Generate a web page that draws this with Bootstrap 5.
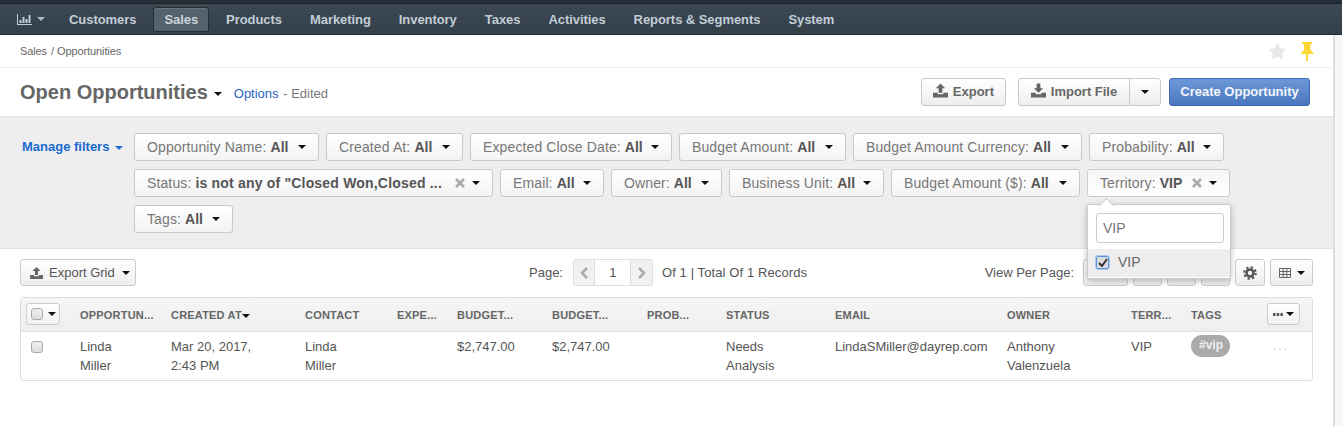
<!doctype html>
<html lang="en">
<head>
<meta charset="utf-8">
<title>Open Opportunities</title>
<link href="https://cdn.jsdelivr.net/npm/bootstrap@5.3.0/dist/css/bootstrap.min.css" rel="stylesheet">
<style>
html,body{height:426px;overflow:hidden}
body{font-family:"Liberation Sans",Arial,sans-serif;font-size:13px;color:#555;background:#fff;line-height:19px}
.topstrip{height:4px;background:#262f37;border-bottom:1px solid #1c2328}
.mainbar{height:31px;background:linear-gradient(#3c4853,#33404a);border-bottom:1px solid #20282f;padding:0 0 0 17px}
.mainbar a{color:#c2cdd6;font-weight:700;font-size:13px;letter-spacing:-.06px;text-decoration:none;line-height:23px;padding:0 10px;margin-right:6px;border-radius:3px;border:1px solid transparent;height:25px}
.mainbar a.first{padding:0;margin-right:6px;width:35px;display:flex;align-items:center;gap:5px;border:0}
.mainbar a.on{background:#55616c;border-color:#232c33;color:#ccd5dc;box-shadow:inset 0 1px 0 #66727d}
.pagebody{height:391px}
.mainpane{width:1333px;flex:none}
.gutter{flex:1;background:#f7f7f7;border-left:2px solid #ddd}
.crumbs{height:33px;border-bottom:1px solid #eee;padding:0 19px 0 20px;font-size:11px;letter-spacing:-.1px;color:#666}
.crumbs .sep{margin:0 3px 0 4px}
.crumbicons{gap:13px}
.headrow{height:48px;padding:0 23px 0 20px}
.ttl{font-size:20px;font-weight:700;color:#666;line-height:24px}
.caret-s{display:inline-block;border-top:4px solid #111;border-left:4px solid transparent;border-right:4px solid transparent;vertical-align:middle;flex:none}
.mainbar .navcaret{border-top-color:#aebac4}
.ttlcaret{margin-left:6px;margin-top:3px}
.opt{color:#2a64c4;margin-left:12px;margin-top:2px}
.edited{color:#777;margin-top:2px;margin-left:1px}
.cbtn{height:28px;padding:0 11px;border:1px solid #c8c8c8;border-radius:3px;background:linear-gradient(#fff,#eee);color:#666;font-weight:700;font-size:13px;line-height:26px;white-space:nowrap}
.cbtn svg{vertical-align:-2px;margin-right:5px}
.cbtn.lft{border-radius:3px 0 0 3px;width:112px;padding:0}
.cbtn.rgt{border-radius:0 3px 3px 0;padding:0;width:32px;display:flex;align-items:center;justify-content:center;margin-left:-1px}
.importgrp{margin-left:12px}
.cprimary{background:linear-gradient(#6d98d9,#4a76bf);border:1px solid #3e68ad;color:#f3f6fb;height:28px;width:141px;padding:0;border-radius:3px;font-weight:700;font-size:13px;line-height:26px;margin-left:8px;white-space:nowrap}
.filters{background:#eee;height:133px;padding:16px 0 0 22px;border-top:1px solid #e3e3e3;border-bottom:1px solid #e3e3e3}
.manage{color:#1a6ad0;font-weight:700;font-size:13px;width:112px;flex:none;padding-top:4px;line-height:19px}
.manage .caret-s{border-top-color:#1a6ad0;margin-left:2px}
.chiprow{display:flex;flex-wrap:wrap;align-content:flex-start;gap:8px 7px;width:1110px}
.chip{height:28px;background:linear-gradient(#fff,#f3f3f3);border:1px solid #c9c9c9;border-radius:3px;padding:0 12px;color:#777;font-size:14px;letter-spacing:.12px;line-height:26px;white-space:nowrap;display:flex;align-items:center}
.chip b{color:#555;margin-left:4px;letter-spacing:0}
.chip .caret-s{margin-left:auto}
.chip .xx{margin-left:auto}
.chip .xx + .caret-s{margin-left:7px}
.chip .xx svg{display:block}
.chip:nth-child(1){width:185px}.chip:nth-child(2){width:137px}.chip:nth-child(3){width:202px}.chip:nth-child(4){width:167px}.chip:nth-child(5){width:229px}.chip:nth-child(6){width:135px}
.chip:nth-child(7){width:359px}.chip:nth-child(8){width:104px}.chip:nth-child(9){width:111px}.chip:nth-child(10){width:155px}.chip:nth-child(11){width:189px}.chip:nth-child(12){width:143px}.chip:nth-child(13){width:99px}
.chip:nth-child(7) b{letter-spacing:.19px}
.chip.open{background:linear-gradient(#f6f6f6,#fff);border-color:#ccc}
.popmenu{position:absolute;left:1087px;top:204px;width:144px;height:75px;background:#fff;border:1px solid #ccc;border-radius:2px;box-shadow:0 2px 6px rgba(0,0,0,.25);z-index:10}
.popmenu:before{content:"";position:absolute;left:13px;top:-5px;width:11px;height:11px;background:#fff;border-left:1px solid #ccc;border-top:1px solid #ccc;transform:rotate(45deg)}
.popinput{display:block;margin:8px 6px 0 8px;width:128px;height:30px;border:1px solid #ccc;border-radius:3px;font-size:14px;color:#777;padding:0 6px;line-height:28px;position:relative;background:#fff}
.popitem{margin-top:6px;height:28px;background:#eee;display:flex;align-items:center;font-size:14px;color:#666;padding:0 0 2px 8px;gap:9px}
.popcheck{width:13px;height:13px;border:1px solid #5c8fe0;outline:1px solid #a9c5f0;border-radius:2px;background:#ddd;display:flex;align-items:center;justify-content:center}
.toolrow{height:48px;padding:10px 20px 0;align-items:flex-start}
.exgrid{width:116px;height:27px;padding:0 5px 0 9px;border:1px solid #ccc;border-radius:3px;background:linear-gradient(#fff,#eee);font-size:13px;color:#555;display:flex;align-items:center;gap:6px;line-height:1;white-space:nowrap;flex:none}
.exgrid .caret-s{margin-left:auto}
.midpart{margin-left:393px;height:27px;display:flex;align-items:center;white-space:nowrap}
.pager{display:flex;height:27px;margin:0 9px 0 10px;border:1px solid #ddd;border-radius:3px;background:#f1f1f1;width:80px}
.pager span{flex:1;display:flex;align-items:center;justify-content:center}
.pager i{font-style:normal;width:37px;background:#fff;border-left:1px solid #ddd;border-right:1px solid #ddd;text-align:center;line-height:25px;font-size:13px}
.totals{letter-spacing:.1px}
.rgtools{margin-left:auto;display:flex;height:27px;align-items:center;white-space:nowrap;gap:5px}
.rgtools span.lbl{margin-right:4px}
.tb{height:27px;border:1px solid #ccc;border-radius:3px;background:linear-gradient(#fff,#eee);display:flex;align-items:center;justify-content:center;flex:none}
.w45{width:45px}.w29{width:29px}.w30{width:30px}.w43{width:43px;gap:6px}
.gridwrap{margin:0 20px;width:1293px;height:84px;border:1px solid #ddd;border-radius:3px}
.gridtable{width:1291px;table-layout:fixed;border-collapse:collapse;margin:0;font-size:13px;--bs-table-bg:transparent}
.gridtable th{height:33px;padding:3px 0 0 5px;font-size:11px;font-weight:700;letter-spacing:.2px;color:#666;background:linear-gradient(#f6f6f6,#eee);border-bottom:1px solid #ddd;white-space:nowrap;vertical-align:middle;line-height:1}
.gridtable th:first-child,.gridtable th:last-child{padding-top:0}
.gridtable td{padding:5px 0 0 5px;vertical-align:top;color:#555;line-height:19px;border:0}
.sq{display:inline-block;width:12px;height:12px;border:1px solid #aaa;border-radius:3px;background:linear-gradient(#eee,#ddd)}
.sq.rowchk{margin-left:5px;margin-top:4px;display:block}
.hchk{width:34px;height:22px;border:1px solid #ccc;border-radius:3px;display:flex;align-items:center;gap:5px;padding-left:4px;background:linear-gradient(#fff,#f1f1f1)}
.hmore{width:33px;height:22px;border:1px solid #ccc;border-radius:3px;display:flex;align-items:center;gap:3px;justify-content:center;background:linear-gradient(#fff,#f1f1f1)}
.tagpill{display:inline-block;background:#aaa;color:#eee;font-weight:700;font-size:12px;border-radius:11px;height:22px;line-height:21px;padding:0 7px 0 8px;margin-top:-2px;vertical-align:top}
.gridtable td.dots{color:#ccc;letter-spacing:2px;padding-left:11px;font-size:12px}
</style>
</head>
<body>
<div class="topstrip"></div>
<nav class="mainbar d-flex align-items-center">
<a class="first" href="#" aria-label="Dashboard"><svg width="15" height="11" viewBox="0 0 15 11"><path fill="#c2cdd6" d="M0 0h1v10h14v1H0zM2.500 6h2v3h-2zM5.500 3h2v6h-2zM8.500 5h2v4h-2zM11.500 1h2v8h-2z"/></svg><span class="caret-s navcaret"></span></a>
<a href="#">Customers</a><a class="on" href="#">Sales</a><a href="#">Products</a><a href="#">Marketing</a><a href="#">Inventory</a><a href="#">Taxes</a><a href="#">Activities</a><a href="#">Reports &amp; Segments</a><a href="#">System</a>
</nav>
<div class="pagebody d-flex">
<div class="mainpane">
<div class="crumbs d-flex align-items-center justify-content-between">
<div>Sales<span class="sep">/</span>Opportunities</div>
<div class="crumbicons d-flex align-items-center">
<svg width="19" height="18" viewBox="0 0 19 18"><path fill="#e8e8e8" d="M9.500 0.500l2.800 5.700 6.200.9-4.500 4.400 1.100 6.200-5.600-2.900-5.600 2.900 1.100-6.200L.500 7.100l6.200-.9z"/></svg>
<svg width="14" height="19" viewBox="0 0 14 19"><path fill="#fdd835" d="M2 0h10v2h-1.500v6l3 3v1H8v7H6v-7H1v-1l3-3V2H2z"/></svg>
</div>
</div>
<div class="headrow d-flex align-items-center justify-content-between">
<div class="d-flex align-items-center">
<span class="ttl">Open Opportunities</span><span class="caret-s ttlcaret"></span>
<span class="opt">Options</span><span class="edited">&nbsp;- Edited</span>
</div>
<div class="d-flex align-items-center">
<button class="btn cbtn"><svg width="15" height="15" viewBox="0 0 16 15"><path fill="#666" d="M8 0l5 5H10v5H6V5H3zM0 10h5v1.500h6V10h5v5H0z"/></svg>Export</button>
<div class="d-flex importgrp"><button class="btn cbtn lft"><svg width="15" height="15" viewBox="0 0 16 15"><path fill="#666" d="M6 0h4v5h3l-5 5-5-5h3zM0 10h5v1.500h6V10h5v5H0z"/></svg>Import File</button><button class="btn cbtn rgt" aria-label="More"><span class="caret-s"></span></button></div>
<button class="btn cprimary">Create Opportunity</button>
</div>
</div>
<div class="filters d-flex">
<div class="manage">Manage filters <span class="caret-s"></span></div>
<div class="chiprow">
<div class="chip">Opportunity Name:<b>All</b><span class="caret-s"></span></div>
<div class="chip">Created At:<b>All</b><span class="caret-s"></span></div>
<div class="chip">Expected Close Date:<b>All</b><span class="caret-s"></span></div>
<div class="chip">Budget Amount:<b>All</b><span class="caret-s"></span></div>
<div class="chip">Budget Amount Currency:<b>All</b><span class="caret-s"></span></div>
<div class="chip">Probability:<b>All</b><span class="caret-s"></span></div>
<div class="chip">Status:<b>is not any of "Closed Won,Closed ...</b><span class="xx"><svg width="10" height="10" viewBox="0 0 10 10"><path stroke="#aaa" stroke-width="2.600" d="M1 1l8 8M9 1l-8 8"/></svg></span><span class="caret-s"></span></div>
<div class="chip">Email:<b>All</b><span class="caret-s"></span></div>
<div class="chip">Owner:<b>All</b><span class="caret-s"></span></div>
<div class="chip">Business Unit:<b>All</b><span class="caret-s"></span></div>
<div class="chip">Budget Amount ($):<b>All</b><span class="caret-s"></span></div>
<div class="chip open">Territory:<b>VIP</b><span class="xx"><svg width="10" height="10" viewBox="0 0 10 10"><path stroke="#aaa" stroke-width="2.600" d="M1 1l8 8M9 1l-8 8"/></svg></span><span class="caret-s"></span></div>
<div class="chip">Tags:<b>All</b><span class="caret-s"></span></div>
</div>
</div>
<div class="toolrow d-flex">
<div class="exgrid"><svg width="13" height="12" viewBox="0 0 16 15"><path fill="#666" d="M8 0l5 5H10v5H6V5H3zM0 10h5v1.500h6V10h5v5H0z"/></svg>Export Grid<span class="caret-s"></span></div>
<div class="midpart">Page:<div class="pager"><span><svg width="8" height="12" viewBox="0 0 8 12"><path fill="none" stroke="#aaa" stroke-width="2.500" d="M7 1L2 6l5 5"/></svg></span><i>1</i><span><svg width="8" height="12" viewBox="0 0 8 12"><path fill="none" stroke="#aaa" stroke-width="2.500" d="M1 1l5 5-5 5"/></svg></span></div><span class="totals">Of 1 | Total Of 1 Records</span></div>
<div class="rgtools"><span class="lbl">View Per Page:</span>
<div class="tb w45"></div><div class="tb w29"></div><div class="tb w29"></div><div class="tb w29"></div>
<div class="tb w30"><svg width="14" height="14" viewBox="0 0 16 16"><circle cx="8" cy="8" r="4" fill="none" stroke="#555" stroke-width="3"/><circle cx="8" cy="8" r="6.600" fill="none" stroke="#555" stroke-width="2.400" stroke-dasharray="2.590 2.590"/></svg></div>
<div class="tb w43"><svg width="12" height="10" viewBox="0 0 12 10"><path fill="none" stroke="#666" d="M.500.500h11v9H.500zM.500 3.500h11M.500 6.500h11M4.200.500v9M7.800.500v9"/></svg><span class="caret-s"></span></div>
</div>
</div>
<div class="gridwrap">
<table class="table gridtable">
<colgroup><col style="width:54px"><col style="width:91px"><col style="width:134px"><col style="width:92px"><col style="width:60px"><col style="width:95px"><col style="width:95px"><col style="width:79px"><col style="width:109px"><col style="width:172px"><col style="width:124px"><col style="width:60px"><col style="width:76px"><col style="width:50px"></colgroup>
<thead><tr>
<th><div class="hchk"><span class="sq"></span><span class="caret-s"></span></div></th>
<th>OPPORTUN...</th><th>CREATED AT<span class="caret-s"></span></th><th>CONTACT</th><th>EXPE...</th><th>BUDGET...</th><th>BUDGET...</th><th>PROB...</th><th>STATUS</th><th>EMAIL</th><th>OWNER</th><th>TERR...</th><th>TAGS</th>
<th><div class="hmore"><svg width="10" height="3" viewBox="0 0 10 3"><path fill="#555" d="M0 0h2.500v3H0zM3.700 0h2.500v3H3.700zM7.400 0h2.500v3H7.400z"/></svg><span class="caret-s"></span></div></th>
</tr></thead>
<tbody><tr>
<td><span class="sq rowchk"></span></td>
<td>Linda<br>Miller</td><td>Mar 20, 2017,<br>2:43 PM</td><td>Linda<br>Miller</td><td></td><td>$2,747.00</td><td>$2,747.00</td><td></td><td>Needs<br>Analysis</td><td>LindaSMiller@dayrep.com</td><td>Anthony<br>Valenzuela</td><td>VIP</td><td><span class="tagpill">#vip</span></td><td class="dots">...</td>
</tr></tbody>
</table>
</div>
</div>
<div class="gutter"></div>
</div>
<div class="popmenu">
<div class="popinput">VIP</div>
<div class="popitem"><span class="popcheck"><svg width="10" height="9" viewBox="0 0 10 9"><path fill="none" stroke="#333" stroke-width="2" d="M1 5l3 3 5-7"/></svg></span>VIP</div>
</div>
<script src="https://cdn.jsdelivr.net/npm/bootstrap@5.3.0/dist/js/bootstrap.bundle.min.js"></script>
</body>
</html>
